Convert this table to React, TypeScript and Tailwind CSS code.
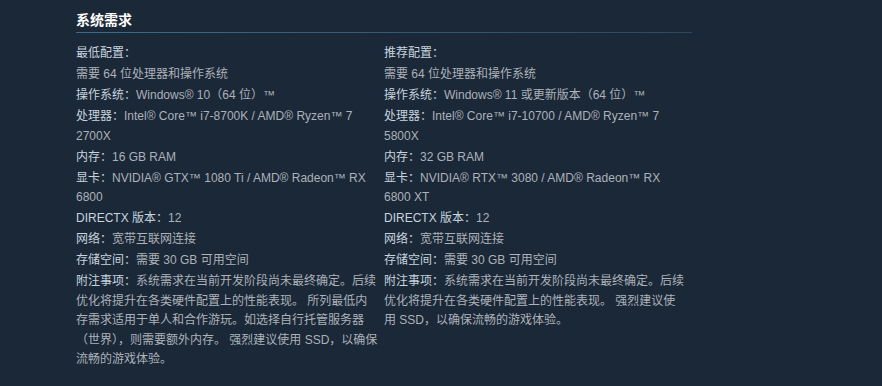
import React from "react";

type Item = { label?: string; value: string };

const left: Item[] = [
  { label: "最低配置：", value: "" },
  { value: "需要 64 位处理器和操作系统" },
  { label: "操作系统：", value: "Windows® 10（64 位）™" },
  { label: "处理器：", value: "Intel® Core™ i7-8700K / AMD® Ryzen™ 7 2700X" },
  { label: "内存：", value: "16 GB RAM" },
  { label: "显卡：", value: "NVIDIA® GTX™ 1080 Ti / AMD® Radeon™ RX 6800" },
  { label: "DIRECTX 版本：", value: "12" },
  { label: "网络：", value: "宽带互联网连接" },
  { label: "存储空间：", value: "需要 30 GB 可用空间" },
  {
    label: "附注事项：",
    value:
      "系统需求在当前开发阶段尚未最终确定。后续优化将提升在各类硬件配置上的性能表现。 所列最低内存需求适用于单人和合作游玩。如选择自行托管服务器（世界），则需要额外内存。 强烈建议使用 SSD，以确保流畅的游戏体验。",
  },
];

const right: Item[] = [
  { label: "推荐配置：", value: "" },
  { value: "需要 64 位处理器和操作系统" },
  { label: "操作系统：", value: "Windows® 11 或更新版本（64 位）™" },
  { label: "处理器：", value: "Intel® Core™ i7-10700 / AMD® Ryzen™ 7 5800X" },
  { label: "内存：", value: "32 GB RAM" },
  { label: "显卡：", value: "NVIDIA® RTX™ 3080 / AMD® Radeon™ RX 6800 XT" },
  { label: "DIRECTX 版本：", value: "12" },
  { label: "网络：", value: "宽带互联网连接" },
  { label: "存储空间：", value: "需要 30 GB 可用空间" },
  {
    label: "附注事项：",
    value:
      "系统需求在当前开发阶段尚未最终确定。后续优化将提升在各类硬件配置上的性能表现。 强烈建议使用 SSD，以确保流畅的游戏体验。",
  },
];

function Col({ items }: { items: Item[] }) {
  return (
    <ul className="w-[302px] list-none m-0 p-0">
      {items.map((it, i) => (
        <li key={i} className="leading-[19.5px] mb-[1.5px]">
          {it.label && <span className="text-[#c6d4df]">{it.label}</span>}
          {it.value && <span>{it.value}</span>}
        </li>
      ))}
    </ul>
  );
}

export default function App() {
  return (
    <div
      className="min-h-screen w-full bg-[#1b2838] pl-[76px] pt-[10px]"
      style={{ fontFamily: '"Liberation Sans", Arial, "Noto Sans CJK SC", sans-serif' }}
    >
      <div className="w-[616px]">
        <h2 className="text-[14px] leading-[20px] text-white font-bold pb-[2px] m-0">系统需求</h2>
        <div className="h-px w-full bg-gradient-to-r from-[#3a6d8d] to-[#2a4a62]" />
        <div className="mt-[11px] flex gap-[6px] text-[12px] text-[#acb2b8]">
          <Col items={left} />
          <Col items={right} />
        </div>
      </div>
    </div>
  );
}
